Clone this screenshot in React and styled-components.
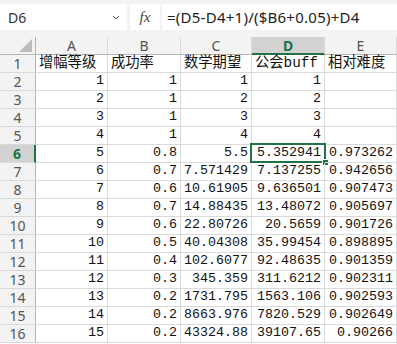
import React from "react";
import styled, { createGlobalStyle } from "styled-components";

const GlobalStyle = createGlobalStyle`
  html, body {
    margin: 0;
    padding: 0;
    background: #fff;
  }
  body {
    font-family: "Noto Sans", "Noto Sans CJK SC", sans-serif;
  }
`;

const Window = styled.div`
  width: 397px;
  height: 344px;
  overflow: hidden;
  background: #fff;
`;

const FormulaBar = styled.div`
  height: 37px;
  box-sizing: border-box;
  padding-top: 4px;
  background: #f3f3f3;
  display: flex;
  align-items: flex-start;
`;

const NameBox = styled.div`
  width: 127px;
  height: 26px;
  box-sizing: border-box;
  padding: 0 7px 0 8px;
  background: #fff;
  display: flex;
  align-items: center;
  justify-content: space-between;
  font-size: 14px;
  color: #333;
`;

const FxButton = styled.div`
  width: 30px;
  height: 26px;
  margin-left: 3px;
  background: #fff;
  display: flex;
  align-items: center;
  justify-content: center;
  font-family: "Liberation Serif", serif;
  font-style: italic;
  font-size: 15px;
  color: #444;
`;

const FormulaInput = styled.div`
  flex: 1;
  height: 26px;
  margin-left: 2px;
  padding-left: 5px;
  background: #fff;
  display: flex;
  align-items: center;
  font-size: 15px;
  letter-spacing: 0.25px;
  color: #222;
  white-space: nowrap;
`;

const Sheet = styled.div`
  display: grid;
  grid-template-columns: 36px 72px 73px 71px 73px 72px;
  grid-auto-rows: 18px;
`;

const Corner = styled.div`
  box-sizing: border-box;
  background: #f3f3f3;
  border-right: 1px solid #b5b5b5;
  border-bottom: 1px solid #b5b5b5;
  display: flex;
  align-items: flex-end;
  justify-content: flex-end;
  padding: 0 3px 2px 0;
`;

const ColHead = styled.div`
  box-sizing: border-box;
  background: ${(p) => (p.$active ? "#d2d2d2" : "#f3f3f3")};
  border-right: 1px solid #d9d9d9;
  border-bottom: ${(p) => (p.$active ? "2px solid #217346" : "1px solid #b5b5b5")};
  display: flex;
  align-items: center;
  justify-content: center;
  font-size: 14px;
  line-height: 16px;
  font-weight: ${(p) => (p.$active ? 700 : 400)};
  color: ${(p) => (p.$active ? "#217346" : "#555")};
  padding-top: ${(p) => (p.$active ? "1px" : "0")};
`;

const RowHead = styled.div`
  box-sizing: border-box;
  background: ${(p) => (p.$active ? "#d2d2d2" : "#f3f3f3")};
  border-right: ${(p) => (p.$active ? "2px solid #217346" : "1px solid #b5b5b5")};
  border-bottom: 1px solid #d9d9d9;
  display: flex;
  align-items: center;
  justify-content: center;
  font-size: 14px;
  line-height: 16px;
  font-weight: ${(p) => (p.$active ? 700 : 400)};
  color: ${(p) => (p.$active ? "#217346" : "#555")};
`;

const Cell = styled.div`
  position: relative;
  box-sizing: border-box;
  border-right: 1px solid #dadada;
  border-bottom: 1px solid #dadada;
  display: flex;
  align-items: flex-end;
  justify-content: ${(p) => (p.$align === "left" ? "flex-start" : "flex-end")};
  padding: 0 3px 1px 3px;
  white-space: nowrap;
  font-family: "Liberation Mono", "Noto Sans CJK SC", monospace;
  font-size: ${(p) => (p.$title ? "14.3px" : "13.33px")};
  line-height: 16px;
  color: #111;
`;

const Selection = styled.div`
  position: absolute;
  top: -2px;
  left: -2px;
  right: -2px;
  bottom: -1px;
  border: 2px solid #217346;
  pointer-events: none;
`;

const FillHandle = styled.div`
  position: absolute;
  right: -5px;
  bottom: -5px;
  width: 5px;
  height: 5px;
  background: #217346;
  border: 1px solid #fff;
`;

const columns = ["A", "B", "C", "D", "E"];

const rows = [
  ["增幅等级", "成功率", "数学期望", "公会buff", "相对难度"],
  ["1", "1", "1", "1", ""],
  ["2", "1", "2", "2", ""],
  ["3", "1", "3", "3", ""],
  ["4", "1", "4", "4", ""],
  ["5", "0.8", "5.5", "5.352941", "0.973262"],
  ["6", "0.7", "7.571429", "7.137255", "0.942656"],
  ["7", "0.6", "10.61905", "9.636501", "0.907473"],
  ["8", "0.7", "14.88435", "13.48072", "0.905697"],
  ["9", "0.6", "22.80726", "20.5659", "0.901726"],
  ["10", "0.5", "40.04308", "35.99454", "0.898895"],
  ["11", "0.4", "102.6077", "92.48635", "0.901359"],
  ["12", "0.3", "345.359", "311.6212", "0.902311"],
  ["13", "0.2", "1731.795", "1563.106", "0.902593"],
  ["14", "0.2", "8663.976", "7820.529", "0.902649"],
  ["15", "0.2", "43324.88", "39107.65", "0.90266"],
];

const activeCol = 3;
const activeRow = 5;

export default function App() {
  return (
    <Window>
      <GlobalStyle />
      <FormulaBar>
        <NameBox>
          <span>D6</span>
          <svg width="8" height="5" viewBox="0 0 8 5">
            <path d="M1 1 L4 4 L7 1" fill="none" stroke="#555" strokeWidth="1" />
          </svg>
        </NameBox>
        <FxButton>fx</FxButton>
        <FormulaInput>=(D5-D4+1)/($B6+0.05)+D4</FormulaInput>
      </FormulaBar>
      <Sheet>
        <Corner>
          <svg width="13" height="13" viewBox="0 0 13 13">
            <path d="M13 0 L13 13 L0 13 Z" fill="#bcbcbc" />
          </svg>
        </Corner>
        {columns.map((c, i) => (
          <ColHead key={c} $active={i === activeCol}>
            {c}
          </ColHead>
        ))}
        {rows.map((row, r) => (
          <React.Fragment key={r}>
            <RowHead $active={r === activeRow}>{r + 1}</RowHead>
            {row.map((val, c) => (
              <Cell key={c} $align={r === 0 ? "left" : "right"} $title={r === 0}>
                {val}
                {r === activeRow && c === activeCol && (
                  <Selection>
                    <FillHandle />
                  </Selection>
                )}
              </Cell>
            ))}
          </React.Fragment>
        ))}
      </Sheet>
    </Window>
  );
}
